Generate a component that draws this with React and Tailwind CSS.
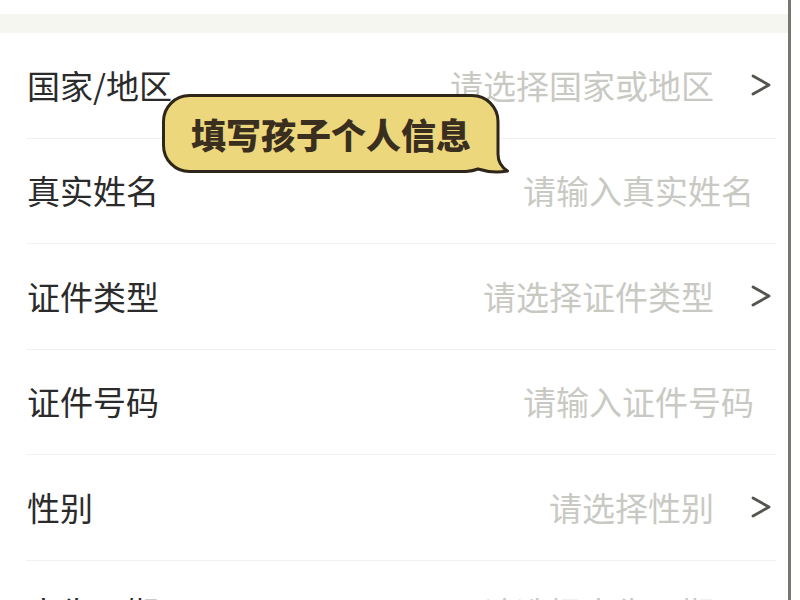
import React from 'react';

const rows = [
  { label: '国家/地区', hint: '请选择国家或地区', arrow: true },
  { label: '真实姓名', hint: '请输入真实姓名', arrow: false },
  { label: '证件类型', hint: '请选择证件类型', arrow: true },
  { label: '证件号码', hint: '请输入证件号码', arrow: false },
  { label: '性别', hint: '请选择性别', arrow: true },
  { label: '出生日期', hint: '请选择出生日期', arrow: true },
];

function Chevron() {
  return (
    <svg width="22" height="24" viewBox="0 0 22 24" className="shrink-0 mr-[4px]">
      <path d="M3 3 L19 12 L3 21" fill="none" stroke="#55554f" strokeWidth="2.8" strokeLinecap="round" strokeLinejoin="round" />
    </svg>
  );
}

function Bubble() {
  return (
    <div className="absolute left-[162px] top-[94px] w-[348px] h-[80px]">
      <svg width="348" height="80" viewBox="0 0 348 80" className="absolute inset-0">
        <path
          d="M27.5 1.5 H310 A26 26 0 0 1 336 27.5 V60 Q336 71 345.5 77 Q330 79.5 316 75 Q311 77 304 77.5 H27.5 A26 26 0 0 1 1.5 51.5 V27.5 A26 26 0 0 1 27.5 1.5 Z"
          fill="#ecd77c"
          stroke="#2e2619"
          strokeWidth="3"
          strokeLinejoin="round"
        />
      </svg>
      <div className="relative flex h-[78px] w-[338px] items-center justify-center text-[35px] font-black text-[#3a2e1f] leading-none">
        填写孩子个人信息
      </div>
    </div>
  );
}

export default function App() {
  return (
    <div className="relative w-[800px] h-[600px] overflow-hidden bg-white" style={{ fontFamily: '"Noto Sans CJK SC", "Noto Sans", sans-serif' }}>
      <div className="flex h-full items-start">
        <div className="w-[788px] shrink-0">
          <div className="h-[14px]" />
          <div className="h-[19px] bg-[#f6f6f0]" />
          <div className="pl-[26px] pr-[12px]">
            {rows.map((r) => (
              <div key={r.label} className="flex h-[105.5px] items-center border-b border-[#f1f1ee]">
                <span className="pl-[1px] text-[33px] text-[#2b2b2b] leading-none">{r.label}</span>
                <span className={`ml-auto text-[33px] text-[#c9c9c4] leading-none ${r.arrow ? 'mr-[36px]' : 'mr-[22px]'}`}>{r.hint}</span>
                {r.arrow && <Chevron />}
              </div>
            ))}
          </div>
        </div>
        <div className="w-[3px] h-full shrink-0 bg-[#77776f]" />
        <div className="flex-1 h-full bg-white" />
      </div>
      <Bubble />
    </div>
  );
}
